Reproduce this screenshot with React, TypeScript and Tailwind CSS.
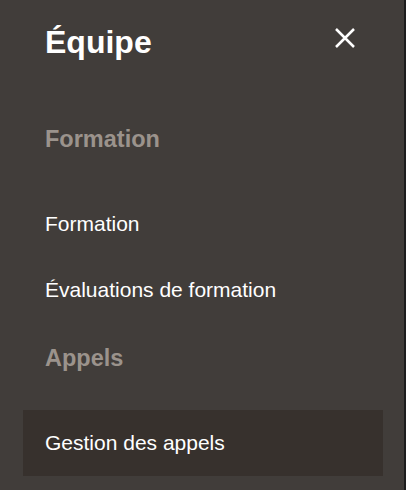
import React from 'react';

type Group = { title: string; items: { label: string; active?: boolean }[] };

const groups: Group[] = [
  {
    title: 'Formation',
    items: [{ label: 'Formation' }, { label: 'Évaluations de formation' }],
  },
  {
    title: 'Appels',
    items: [{ label: 'Gestion des appels', active: true }],
  },
];

const CloseIcon = () => (
  <svg width="20" height="20" viewBox="0 0 20 20" fill="none">
    <path d="M1 1L19 19M19 1L1 19" stroke="white" strokeWidth="2.5" />
  </svg>
);

export default function App() {
  return (
    <div className="flex w-full h-[490px] bg-[#1d1d1d] overflow-hidden">
      <nav className="w-[404px] h-full shrink-0 bg-[#413d3a] pl-[23px] pr-[21px] font-['Liberation_Sans',Arial,sans-serif]">
        <div className="flex items-start justify-between pl-[22px] pr-[28px] pt-[24px] mb-[44px]">
          <h1 className="text-[32px] leading-[36px] font-bold text-white">Équipe</h1>
          <button className="mt-[4px]" aria-label="Fermer">
            <CloseIcon />
          </button>
        </div>
        {groups.map((g) => (
          <div key={g.title}>
            <h2 className="pl-[22px] pt-[21px] pb-[38px] text-[23.5px] leading-[28px] font-bold text-[#9b938c]">
              {g.title}
            </h2>
            <ul>
              {g.items.map((it) => (
                <li
                  key={it.label}
                  className={
                    'flex h-[66px] items-center pl-[22px] pr-[23px] text-[21px] leading-[24px] text-white ' +
                    (it.active ? 'bg-[#37312d]' : '')
                  }
                >
                  {it.label}
                </li>
              ))}
            </ul>
          </div>
        ))}
      </nav>
    </div>
  );
}
